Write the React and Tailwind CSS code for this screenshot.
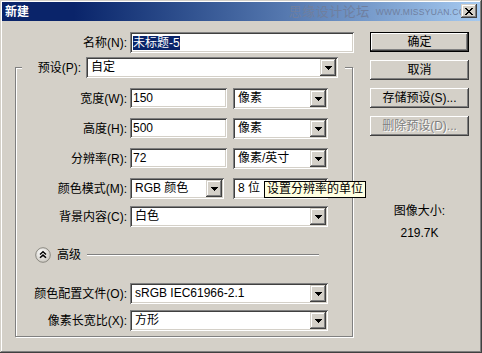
import React from "react";

const sunken =
  "shadow-[inset_1px_1px_0_#808080,inset_-1px_-1px_0_#ffffff,inset_2px_2px_0_#404040,inset_-2px_-2px_0_#d4d0c8]";
const raised =
  "shadow-[inset_-1px_-1px_0_#404040,inset_1px_1px_0_#ffffff,inset_-2px_-2px_0_#808080,inset_2px_2px_0_#d4d0c8]";
const smallRaised =
  "shadow-[inset_-1px_-1px_0_#404040,inset_1px_1px_0_#d4d0c8,inset_-2px_-2px_0_#808080,inset_2px_2px_0_#ffffff]";

function Arrow() {
  return (
    <svg width="7" height="4" viewBox="0 0 7 4" shapeRendering="crispEdges">
      <rect x="0" y="0" width="7" height="1" fill="#000" />
      <rect x="1" y="1" width="5" height="1" fill="#000" />
      <rect x="2" y="2" width="3" height="1" fill="#000" />
      <rect x="3" y="3" width="1" height="1" fill="#000" />
    </svg>
  );
}

function Combo({ value, className = "" }) {
  return (
    <div className={`flex h-[21px] bg-white p-[2px] ${sunken} ${className}`}>
      <div className="flex-1 overflow-hidden whitespace-nowrap pl-[3px] leading-[17px]">{value}</div>
      <div className={`flex w-[16px] items-center justify-center bg-[#d4d0c8] ${smallRaised}`}>
        <Arrow />
      </div>
    </div>
  );
}

function Input({ children, className = "" }) {
  return (
    <div className={`flex h-[20px] items-center bg-white pl-[3px] ${sunken} ${className}`}>{children}</div>
  );
}

function Row({ label, children, className = "" }) {
  return (
    <div className={`flex h-[21px] items-center ${className}`}>
      <div className="w-[111px] whitespace-nowrap text-right">{label}</div>
      <div className="ml-[3px] flex items-start gap-[6px]">{children}</div>
    </div>
  );
}

function Btn({ children, def, disabled }) {
  return (
    <div
      className={`flex h-[20px] w-[99px] items-center justify-center bg-[#d4d0c8] ${
        def ? "border border-black" : ""
      }`}
    >
      <div
        className={`flex h-full w-full items-center justify-center ${raised} ${
          disabled ? "text-[#808080] [text-shadow:1px_1px_0_#ffffff]" : ""
        }`}
      >
        {children}
      </div>
    </div>
  );
}

function AdvIcon() {
  return (
    <svg width="16" height="16" viewBox="0 0 16 16">
      <defs>
        <radialGradient id="g" cx="40%" cy="35%" r="70%">
          <stop offset="0" stopColor="#ffffff" />
          <stop offset="1" stopColor="#c8c4bc" />
        </radialGradient>
      </defs>
      <circle cx="8" cy="8" r="7.3" fill="url(#g)" stroke="#8a8880" strokeWidth="1" />
      <path d="M5 7.5 L8 4.8 L11 7.5 M5 10.8 L8 8.1 L11 10.8" fill="none" stroke="#000" strokeWidth="1.5" />
    </svg>
  );
}

export default function App() {
  return (
    <div
      className={`flex h-[353px] w-[482px] flex-col bg-[#d4d0c8] p-[2px] text-[12px] leading-[14px] text-black font-['Liberation_Sans','Noto_Sans_CJK_SC',sans-serif] shadow-[inset_-1px_-1px_0_#404040,inset_1px_1px_0_#d4d0c8,inset_-2px_-2px_0_#808080,inset_2px_2px_0_#ffffff]`}
    >
      {/* title bar */}
      <div className="relative flex h-[19px] items-center bg-linear-to-r from-[#0a246a] from-15% to-[#a6caf0] pl-[3px] pr-[2px]">
        <div className="font-bold text-white">新建</div>
        <div className="ml-auto flex items-center gap-[6px] pr-[5px] text-[#6f7f9f]">
          <span className="text-[13px] tracking-[0.5px]">思缘设计论坛</span>
          <span className="text-[8.5px] tracking-[0.3px]">WWW.MISSYUAN.COM</span>
        </div>
        <div
          className={`absolute right-[3px] top-[2px] flex h-[14px] w-[16px] items-center justify-center bg-[#d4d0c8] ${smallRaised}`}
        >
          <svg width="8" height="7" viewBox="0 0 8 7" shapeRendering="crispEdges">
            <path d="M0 0h2v1h-2zM6 0h2v1h-2zM1 1h2v1h-2zM5 1h2v1h-2zM2 2h4v1h-4zM3 3h2v1h-2zM2 4h4v1h-4zM1 5h2v1h-2zM5 5h2v1h-2zM0 6h2v1h-2zM6 6h2v1h-2z" fill="#000" />
          </svg>
        </div>
      </div>

      {/* body */}
      <div className="flex flex-1">
        {/* left */}
        <div className="w-[366px]">
          <div className="mt-[11px] flex h-[21px] items-center">
            <div className="w-[125px] text-right">名称(N):</div>
            <Input className="ml-[3px] h-[21px] w-[224px]">
              <span className="bg-[#0a246a] text-white">未标题-5</span>
            </Input>
          </div>

          {/* group box */}
          <div className="ml-[13px] mt-[14px] w-[338px] border border-[#808080] pb-[5px] shadow-[1px_1px_0_#ffffff,inset_1px_1px_0_#ffffff]">
            <div className="-mt-[11px] ml-[6px] flex h-[21px] w-[323px] items-center bg-[#d4d0c8]">
              <div className="w-[59px] text-right">预设(P):</div>
              <Combo value="自定" className="ml-[5px] w-[252px]" />
            </div>

            <Row label="宽度(W):" className="mt-[10px]">
              <Input className="w-[97px]">150</Input>
              <Combo value="像素" className="w-[95px]" />
            </Row>
            <Row label="高度(H):" className="mt-[9px]">
              <Input className="w-[97px]">500</Input>
              <Combo value="像素" className="w-[95px]" />
            </Row>
            <Row label="分辨率(R):" className="mt-[9px]">
              <Input className="w-[97px]">72</Input>
              <Combo value="像素/英寸" className="w-[95px]" />
            </Row>
            <Row label="颜色模式(M):" className="mt-[9px]">
              <Combo value="RGB 颜色" className="w-[94px]" />
              <div className="relative ml-[3px]">
                <Combo value="8 位" className="w-[95px]" />
                <div className="absolute left-[31px] top-[3px] h-[17px] whitespace-nowrap border border-black bg-[#ffffe1] px-[2px] leading-[15px]">
                  设置分辨率的单位
                </div>
              </div>
            </Row>
            <Row label="背景内容(C):" className="mt-[7px]">
              <Combo value="白色" className="w-[198px]" />
            </Row>

            <div className="mt-[20px] flex h-[16px] items-center">
              <div className="ml-[19px]">
                <AdvIcon />
              </div>
              <div className="ml-[6px]">高级</div>
              <div className="ml-[6px] h-[2px] w-[232px] border-t border-[#808080] border-b border-b-white" />
            </div>

            <Row label="颜色配置文件(O):" className="mt-[20px]">
              <Combo value="sRGB IEC61966-2.1" className="w-[198px]" />
            </Row>
            <Row label="像素长宽比(X):" className="mt-[6px]">
              <Combo value="方形" className="w-[198px]" />
            </Row>
          </div>
        </div>

        {/* right */}
        <div className="ml-[2px] flex w-[99px] flex-col">
          <div className="mt-[11px] flex flex-col gap-[8px]">
            <Btn def>确定</Btn>
            <Btn>取消</Btn>
            <Btn>存储预设(S)...</Btn>
            <Btn disabled>删除预设(D)...</Btn>
          </div>
          <div className="mt-[68px] text-center">图像大小:</div>
          <div className="mt-[8px] text-center">219.7K</div>
        </div>
      </div>
    </div>
  );
}
